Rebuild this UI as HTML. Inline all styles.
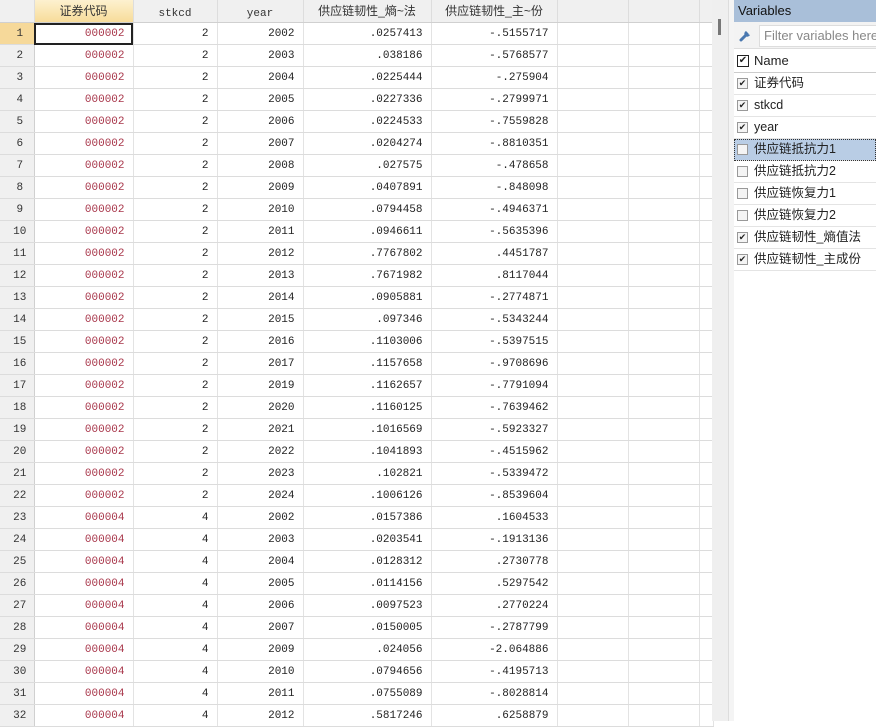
<!DOCTYPE html>
<html><head><meta charset="utf-8"><style>
body{margin:0;width:876px;height:721px;overflow:hidden;background:#fff;font-family:"Liberation Sans","Noto Sans CJK SC",sans-serif;position:relative}
table{border-collapse:collapse;table-layout:fixed;position:absolute;left:0;top:0}
td,th{height:21px;border-right:1px solid #e3e3e3;border-bottom:1px solid #dcdcdc;padding:0 8px 0 0;text-align:right;vertical-align:middle;font-family:"Liberation Mono",monospace;font-size:11px;color:#222;white-space:nowrap;overflow:hidden}
th{height:22px;line-height:22px;background:#f0f0f0;font-weight:normal;text-align:center;padding:0;font-family:"Liberation Mono",monospace;color:#333;border-right:1px solid #ddd;border-bottom:1px solid #d0d0d0}
th span{position:relative;top:3px}
th.cj{font-family:"Liberation Sans","Noto Sans CJK SC",sans-serif;font-size:12px}
th.sel{background:linear-gradient(#fdf1cf,#f7dc9a);color:#333}
td.n{background:#f0f0f0;text-align:center;padding:0 0 0 6px;color:#333;border-right:1px solid #d0d0d0}
td.n.sel{background:#f6d99a}
td.r{color:#a8364a}
td.cur{outline:2px solid #222;outline-offset:-2px}
.sb{position:absolute;left:712px;top:0;width:16px;height:721px;background:#efefef;border-right:1px solid #ddd}
.thumb{position:absolute;left:718px;top:19px;width:3px;height:16px;background:#777}
.gap{position:absolute;left:729px;top:0;width:5px;height:721px;background:#f4f4f4}
.pan{position:absolute;left:734px;top:0;width:142px;height:721px;background:#fff;font-size:12.5px;color:#222}
.ttl{height:22px;background:#a9bfd9;line-height:22px;padding-left:4px;font-size:13px;color:#111}
.flt{height:26px;background:#f3f3f3;position:relative;border-bottom:1px solid #ddd}
.flt span{position:absolute;left:25px;top:3px;width:130px;height:20px;background:#fff;border:1px solid #ddd;line-height:20px;padding-left:4px;color:#888;font-size:13px}
.hd{height:23px;line-height:23px;border-bottom:1px solid #ccc;padding-left:20px;position:relative;font-size:13px}
.it{height:21px;line-height:21px;border-bottom:1px solid #e4e4e4;padding-left:20px;position:relative}
.cb{position:absolute;left:3px;top:5px;width:9px;height:9px;border:1px solid #999;background:#f4f4f4;font-size:9px;line-height:9px;text-align:center;color:#222}
.hd .cb{width:10px;height:10px;border:1px solid #222;background:#fff;top:6px;font-size:10px}
.it.s{background:#b9cde5;outline:1px dotted #333;outline-offset:-1px}
</style></head><body>
<table>
<colgroup><col style="width:34px"><col style="width:99px"><col style="width:84px"><col style="width:86px"><col style="width:128px"><col style="width:126px"><col style="width:71px"><col style="width:71px"><col style="width:14px"></colgroup>
<tr><th></th><th class="cj sel">证券代码</th><th><span>stkcd</span></th><th><span>year</span></th><th class="cj">供应链韧性_熵~法</th><th class="cj">供应链韧性_主~份</th><th></th><th></th><th></th></tr>
<tr><td class="n sel">1</td><td class="r cur">000002</td><td>2</td><td>2002</td><td>.0257413</td><td>-.5155717</td><td></td><td></td><td></td></tr>
<tr><td class="n">2</td><td class="r">000002</td><td>2</td><td>2003</td><td>.038186</td><td>-.5768577</td><td></td><td></td><td></td></tr>
<tr><td class="n">3</td><td class="r">000002</td><td>2</td><td>2004</td><td>.0225444</td><td>-.275904</td><td></td><td></td><td></td></tr>
<tr><td class="n">4</td><td class="r">000002</td><td>2</td><td>2005</td><td>.0227336</td><td>-.2799971</td><td></td><td></td><td></td></tr>
<tr><td class="n">5</td><td class="r">000002</td><td>2</td><td>2006</td><td>.0224533</td><td>-.7559828</td><td></td><td></td><td></td></tr>
<tr><td class="n">6</td><td class="r">000002</td><td>2</td><td>2007</td><td>.0204274</td><td>-.8810351</td><td></td><td></td><td></td></tr>
<tr><td class="n">7</td><td class="r">000002</td><td>2</td><td>2008</td><td>.027575</td><td>-.478658</td><td></td><td></td><td></td></tr>
<tr><td class="n">8</td><td class="r">000002</td><td>2</td><td>2009</td><td>.0407891</td><td>-.848098</td><td></td><td></td><td></td></tr>
<tr><td class="n">9</td><td class="r">000002</td><td>2</td><td>2010</td><td>.0794458</td><td>-.4946371</td><td></td><td></td><td></td></tr>
<tr><td class="n">10</td><td class="r">000002</td><td>2</td><td>2011</td><td>.0946611</td><td>-.5635396</td><td></td><td></td><td></td></tr>
<tr><td class="n">11</td><td class="r">000002</td><td>2</td><td>2012</td><td>.7767802</td><td>.4451787</td><td></td><td></td><td></td></tr>
<tr><td class="n">12</td><td class="r">000002</td><td>2</td><td>2013</td><td>.7671982</td><td>.8117044</td><td></td><td></td><td></td></tr>
<tr><td class="n">13</td><td class="r">000002</td><td>2</td><td>2014</td><td>.0905881</td><td>-.2774871</td><td></td><td></td><td></td></tr>
<tr><td class="n">14</td><td class="r">000002</td><td>2</td><td>2015</td><td>.097346</td><td>-.5343244</td><td></td><td></td><td></td></tr>
<tr><td class="n">15</td><td class="r">000002</td><td>2</td><td>2016</td><td>.1103006</td><td>-.5397515</td><td></td><td></td><td></td></tr>
<tr><td class="n">16</td><td class="r">000002</td><td>2</td><td>2017</td><td>.1157658</td><td>-.9708696</td><td></td><td></td><td></td></tr>
<tr><td class="n">17</td><td class="r">000002</td><td>2</td><td>2019</td><td>.1162657</td><td>-.7791094</td><td></td><td></td><td></td></tr>
<tr><td class="n">18</td><td class="r">000002</td><td>2</td><td>2020</td><td>.1160125</td><td>-.7639462</td><td></td><td></td><td></td></tr>
<tr><td class="n">19</td><td class="r">000002</td><td>2</td><td>2021</td><td>.1016569</td><td>-.5923327</td><td></td><td></td><td></td></tr>
<tr><td class="n">20</td><td class="r">000002</td><td>2</td><td>2022</td><td>.1041893</td><td>-.4515962</td><td></td><td></td><td></td></tr>
<tr><td class="n">21</td><td class="r">000002</td><td>2</td><td>2023</td><td>.102821</td><td>-.5339472</td><td></td><td></td><td></td></tr>
<tr><td class="n">22</td><td class="r">000002</td><td>2</td><td>2024</td><td>.1006126</td><td>-.8539604</td><td></td><td></td><td></td></tr>
<tr><td class="n">23</td><td class="r">000004</td><td>4</td><td>2002</td><td>.0157386</td><td>.1604533</td><td></td><td></td><td></td></tr>
<tr><td class="n">24</td><td class="r">000004</td><td>4</td><td>2003</td><td>.0203541</td><td>-.1913136</td><td></td><td></td><td></td></tr>
<tr><td class="n">25</td><td class="r">000004</td><td>4</td><td>2004</td><td>.0128312</td><td>.2730778</td><td></td><td></td><td></td></tr>
<tr><td class="n">26</td><td class="r">000004</td><td>4</td><td>2005</td><td>.0114156</td><td>.5297542</td><td></td><td></td><td></td></tr>
<tr><td class="n">27</td><td class="r">000004</td><td>4</td><td>2006</td><td>.0097523</td><td>.2770224</td><td></td><td></td><td></td></tr>
<tr><td class="n">28</td><td class="r">000004</td><td>4</td><td>2007</td><td>.0150005</td><td>-.2787799</td><td></td><td></td><td></td></tr>
<tr><td class="n">29</td><td class="r">000004</td><td>4</td><td>2009</td><td>.024056</td><td>-2.064886</td><td></td><td></td><td></td></tr>
<tr><td class="n">30</td><td class="r">000004</td><td>4</td><td>2010</td><td>.0794656</td><td>-.4195713</td><td></td><td></td><td></td></tr>
<tr><td class="n">31</td><td class="r">000004</td><td>4</td><td>2011</td><td>.0755089</td><td>-.8028814</td><td></td><td></td><td></td></tr>
<tr><td class="n">32</td><td class="r">000004</td><td>4</td><td>2012</td><td>.5817246</td><td>.6258879</td><td></td><td></td><td></td></tr>
</table>
<div class="sb"></div><div class="thumb"></div><div class="gap"></div>
<div class="pan">
<div class="ttl">Variables</div>
<div class="flt"><svg style="position:absolute;left:5px;top:6px" width="14" height="14" viewBox="0 0 14 14"><path d="M2 12 L8 6" stroke="#4a78b0" stroke-width="3" stroke-linecap="round"/><path d="M7 3 a3 3 0 1 0 4 4 l-2 -1 -1 -2z" fill="#4a78b0"/></svg><span>Filter variables here</span></div>
<div class="hd"><div class="cb">✔</div>Name</div>
<div class="it"><div class="cb">✔</div>证券代码</div>
<div class="it"><div class="cb">✔</div>stkcd</div>
<div class="it"><div class="cb">✔</div>year</div>
<div class="it s"><div class="cb"></div>供应链抵抗力1</div>
<div class="it"><div class="cb"></div>供应链抵抗力2</div>
<div class="it"><div class="cb"></div>供应链恢复力1</div>
<div class="it"><div class="cb"></div>供应链恢复力2</div>
<div class="it"><div class="cb">✔</div>供应链韧性_熵值法</div>
<div class="it"><div class="cb">✔</div>供应链韧性_主成份</div>
</div>
</body></html>
